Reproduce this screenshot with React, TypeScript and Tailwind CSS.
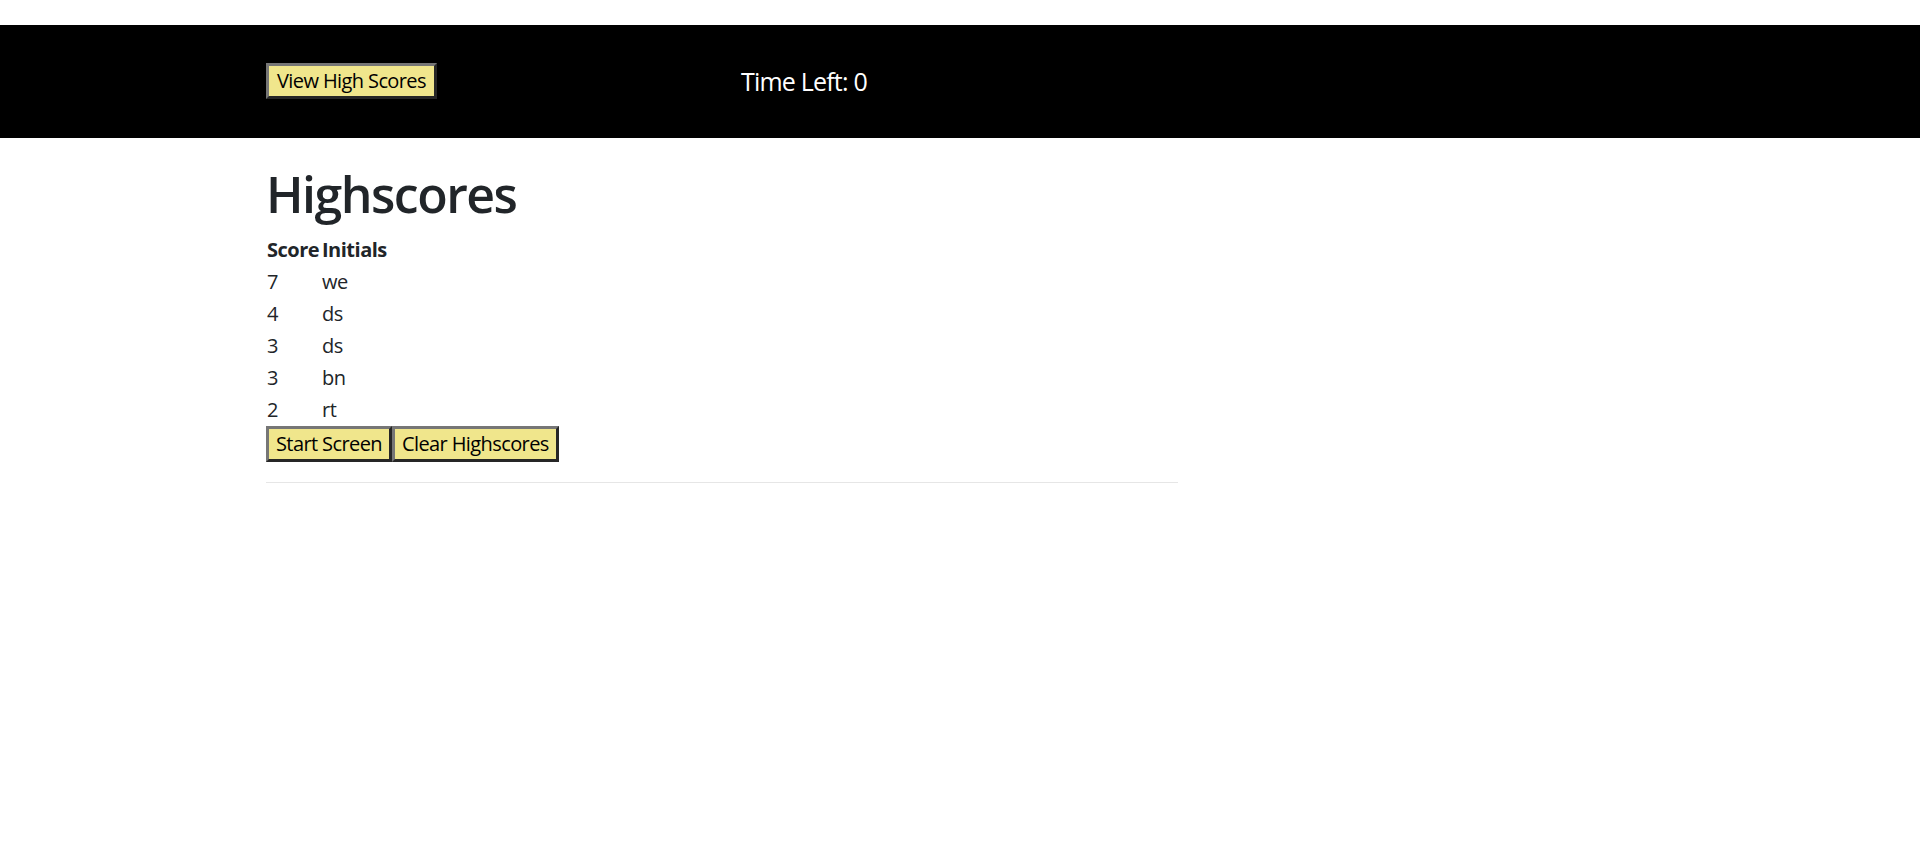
const scores = [
  { score: 7, initials: 'we' },
  { score: 4, initials: 'ds' },
  { score: 3, initials: 'ds' },
  { score: 3, initials: 'bn' },
  { score: 2, initials: 'rt' },
];

const btn =
  'bg-[#f0e68c] text-black text-[20px] leading-[30px] tracking-[-0.6px] px-[7px] border-[3px] border-t-[#767676] border-l-[#767676] border-r-[#262626] border-b-[#262626]';

export default function App() {
  return (
    <div className="min-h-screen bg-white pt-[25px] font-['Open_Sans',sans-serif] text-[20px] leading-[30px] tracking-[-0.5px] text-[#212529]">
      {/* Top bar */}
      <header className="bg-black pt-[38px] pb-[39px]">
        <div className="ml-[266px] flex items-center">
          <div className="w-[475px]">
            <button className={`${btn} px-[8px]`}>View High Scores</button>
          </div>
          <div className="text-[25px] leading-[36px] tracking-[-0.8px] text-white">Time Left: 0</div>
        </div>
      </header>

      {/* Highscores */}
      <main className="ml-[266px] w-[912px]">
        <h1 className="mt-[26px] mb-[10px] text-[50px] leading-[60px] tracking-[-1.5px] font-semibold">Highscores</h1>
        <table className="border-collapse">
          <thead>
            <tr>
              <th className="w-[55px] p-[1px] text-left font-bold">Score</th>
              <th className="p-[1px] text-left font-bold">Initials</th>
            </tr>
          </thead>
          <tbody>
            {scores.map((s, i) => (
              <tr key={i}>
                <td className="p-[1px]">{s.score}</td>
                <td className="p-[1px]">{s.initials}</td>
              </tr>
            ))}
          </tbody>
        </table>
        <div className="flex">
          <button className={btn}>Start Screen</button>
          <button className={btn}>Clear Highscores</button>
        </div>
        <hr className="mt-[20px] border-0 border-t border-[#e6e6e6]" />
      </main>
    </div>
  );
}
